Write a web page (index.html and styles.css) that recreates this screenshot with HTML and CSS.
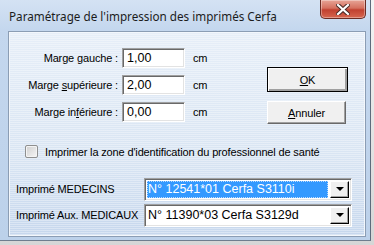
FILE: index.html
```html
<!DOCTYPE html>
<html lang="fr">
<head>
    <meta charset="UTF-8">
    <title>Paramétrage de l'impression des imprimés Cerfa</title>
    <link rel="stylesheet" href="styles.css">
</head>
<body>
    <div class="window">
        <div class="title-bar">
            <span class="title">Paramétrage de l'impression des imprimés Cerfa</span>
            <button class="close-btn" aria-label="Fermer">
                <svg width="14" height="11" viewBox="0 0 14 11">
                    <path d="M2 1 L12 10 M12 1 L2 10" stroke="#4a2a26" stroke-width="4.2" stroke-linecap="square"/>
                    <path d="M2 1 L12 10 M12 1 L2 10" stroke="#ffffff" stroke-width="2.2" stroke-linecap="square"/>
                </svg>
            </button>
        </div>

        <div class="client">
            <div class="top">
                <div class="fields">
                    <div class="field">
                        <label class="field-label">Marge <u>g</u>auche :</label>
                        <div class="edit">1,00</div>
                        <span class="unit">cm</span>
                    </div>
                    <div class="field">
                        <label class="field-label">Marge <u>s</u>upérieure :</label>
                        <div class="edit">2,00</div>
                        <span class="unit">cm</span>
                    </div>
                    <div class="field">
                        <label class="field-label">Marge in<u>f</u>érieure :</label>
                        <div class="edit">0,00</div>
                        <span class="unit">cm</span>
                    </div>
                </div>
                <div class="buttons">
                    <button class="btn btn-default"><span><u>O</u>K</span></button>
                    <button class="btn"><span><u>A</u>nnuler</span></button>
                </div>
            </div>

            <div class="check-row">
                <span class="checkbox"></span>
                <span>Imprimer la zone d'identification du professionnel de santé</span>
            </div>

            <div class="combo-row">
                <span class="combo-label">Imprimé MEDECINS</span>
                <div class="combo">
                    <span class="combo-text selected">N° 12541*01 Cerfa S3110i</span>
                    <span class="combo-arrow"></span>
                </div>
            </div>
            <div class="combo-row">
                <span class="combo-label">Imprimé Aux. MEDICAUX</span>
                <div class="combo">
                    <span class="combo-text">N° 11390*03 Cerfa S3129d</span>
                    <span class="combo-arrow"></span>
                </div>
            </div>
        </div>
    </div>
</body>
</html>
```

FILE: styles.css
```css
body {
    margin: 0;
    width: 374px;
    height: 245px;
    overflow: hidden;
    background: linear-gradient(to bottom, #f4f4f4, #d6d6d6);
    font-family: "Liberation Sans", Arial, sans-serif;
    font-size: 11px;
    letter-spacing: -0.15px;
    color: #000;
}

.window {
    width: 370px;
    height: 240px;
    border-right: 1px solid #5d6b7c;
    border-bottom: 1px solid #6f7d8e;
    background: linear-gradient(to bottom, #d4e2f3 0px, #c4d7ee 30px, #bcd1ea 100%);
    display: flex;
    flex-direction: column;
}

.title-bar {
    height: 31px;
    display: flex;
    align-items: flex-start;
    justify-content: space-between;
    padding-left: 9px;
}

.title {
    font-family: "Noto Sans", sans-serif;
    font-size: 11.7px;
    letter-spacing: 0;
    color: #1c1c1c;
    margin-top: 8px;
}

.close-btn {
    width: 46px;
    height: 19px;
    margin-right: 4px;
    padding: 0;
    border: 1px solid #6b2c24;
    border-top: none;
    border-radius: 0 0 5px 5px;
    background: linear-gradient(to bottom, #e7a597 0%, #d5705f 45%, #c14130 55%, #d6664f 100%);
    box-shadow: inset 0 0 0 1px rgba(255, 255, 255, 0.35);
    display: flex;
    align-items: center;
    justify-content: center;
}

.client {
    margin: 0 4px 0 8px;
    height: 204px;
    border: 1px solid #8b9db4;
    box-shadow: inset 0 0 0 1px #f3f7fc;
    background:
        repeating-linear-gradient(to bottom, rgba(255, 255, 255, 0.35) 0 1px, rgba(255, 255, 255, 0) 1px 2px),
        linear-gradient(to bottom, #e6eef8 0%, #d9e5f3 60%, #c6d7ed 100%);
}

.top {
    display: flex;
    padding-top: 16px;
}

.fields {
    width: 258px;
    display: flex;
    flex-direction: column;
    gap: 7px;
}

.field {
    display: flex;
    align-items: center;
    height: 20px;
}

.field-label {
    width: 109px;
    text-align: right;
    margin-right: 4px;
}

.edit,
.combo {
    background: #fff;
    border-top: 1px solid #a0a0a0;
    border-left: 1px solid #a0a0a0;
    border-right: 1px solid #fff;
    border-bottom: 1px solid #fff;
    box-shadow: inset 1px 1px 0 #696969, inset -1px -1px 0 #e3e3e3;
}

.edit {
    width: 57px;
    height: 18px;
    padding-left: 4px;
    line-height: 18px;
    font-size: 12.5px;
    letter-spacing: 0;
}

.unit {
    margin-left: 8px;
}

.buttons {
    display: flex;
    flex-direction: column;
    gap: 9px;
    padding-top: 19px;
}

.btn {
    width: 79px;
    height: 23px;
    padding: 0;
    font-family: "Liberation Sans", Arial, sans-serif;
    font-size: 11px;
    letter-spacing: -0.15px;
    color: #000;
    background: #f0f0f0;
    border-top: 1px solid #fff;
    border-left: 1px solid #fff;
    border-right: 1px solid #696969;
    border-bottom: 1px solid #696969;
    box-shadow: inset -1px -1px 0 #a0a0a0;
}

.btn-default {
    width: 81px;
    height: 25px;
    border: 1px solid #000;
    box-shadow: inset 1px 1px 0 #fff, inset -2px -2px 0 #a0a0a0, inset -1px -1px 0 #696969;
}

.check-row {
    display: flex;
    align-items: center;
    gap: 7px;
    margin: 20px 0 0 16px;
    height: 15px;
}

.checkbox {
    width: 11px;
    height: 11px;
    border: 1px solid #8e8f8f;
    border-radius: 2px;
    background: linear-gradient(135deg, #cfcfcf, #f6f6f6);
    box-shadow: inset 0 0 0 1px #f4f4f4;
}

.combo-row {
    display: flex;
    align-items: center;
    margin-left: 7px;
    height: 22px;
}

.check-row + .combo-row {
    margin-top: 19px;
}

.combo-row + .combo-row {
    margin-top: 4px;
}

.combo-label {
    width: 128px;
    white-space: nowrap;
}

.combo {
    width: 202px;
    height: 19px;
    padding: 1px 2px 1px 2px;
    display: flex;
    align-items: center;
    justify-content: space-between;
    font-size: 12.5px;
    letter-spacing: 0;
}

.combo-text {
    flex: 1;
    height: 17px;
    line-height: 17px;
    padding-left: 1px;
}

.combo-text.selected {
    background: #3399ff;
    color: #fff;
    outline: 1px dotted #b9d9ff;
    outline-offset: -1px;
}

.combo-arrow {
    width: 17px;
    height: 15px;
    margin-left: 2px;
    background: #f0f0f0;
    border-top: 1px solid #fff;
    border-left: 1px solid #fff;
    border-right: 1px solid #000;
    border-bottom: 1px solid #000;
    box-shadow: inset -1px -1px 0 #a0a0a0;
    display: flex;
    align-items: center;
    justify-content: center;
}

.combo-arrow::after {
    content: "";
    border-left: 4px solid transparent;
    border-right: 4px solid transparent;
    border-top: 4px solid #000;
}
```
